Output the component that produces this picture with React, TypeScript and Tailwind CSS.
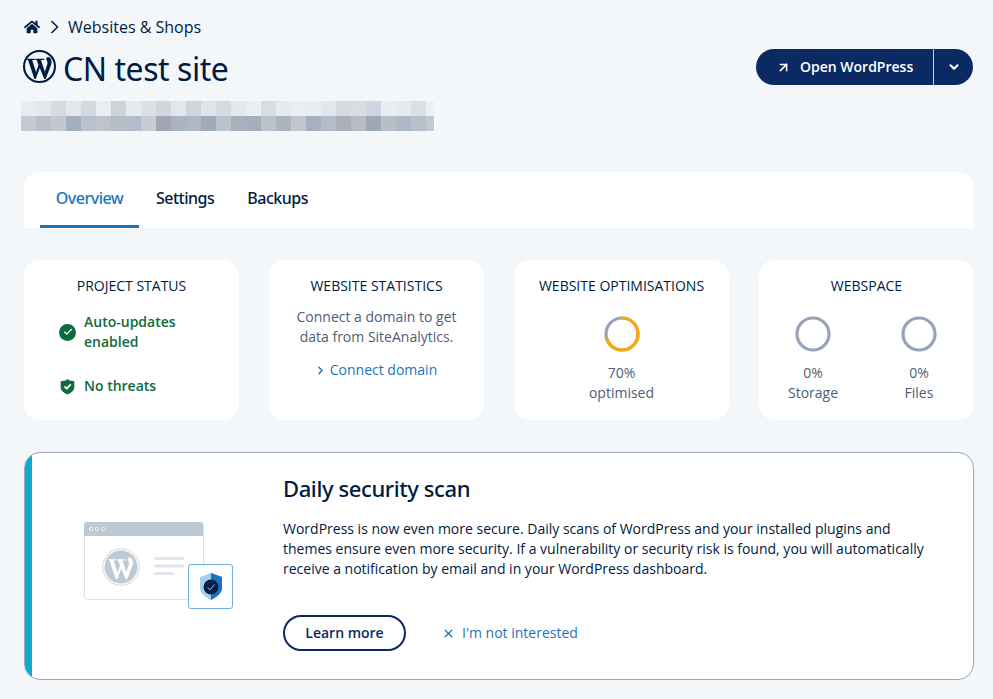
import React from "react";
import { FaHome } from "react-icons/fa";
import { LuChevronDown, LuArrowUpRight, LuChevronRight, LuX, LuCheck } from "react-icons/lu";

const row1 = ["#e8ebef","#e3e6ed","#d6dae3","#e3e7ea","#d3d9e1","#eaedf1","#cdd3da","#e6eaef","#dbe1e9","#d3d7db","#e2e7ef","#d0d5dd","#dfe3eb","#d4d9e2","#e4e8ec","#eaeef1","#d8dce3","#e7eaef","#ebeef2","#e9ecf1","#e3e6ed","#d6d9e1","#d9dce3","#cfd6e0","#e9edf1","#e6eaee","#dadfe4","#ecf0f4"];
const row2 = ["#c3cad4","#b9bfcb","#c3c8d0","#a3b0c0","#b9c1cc","#bdc4ce","#b5bdc9","#b5bcc9","#c5ccd5","#a1a6b2","#a8b5c5","#afb7c4","#9fabbb","#b9c3cc","#a7b0bc","#a3afbc","#b9c3cc","#adb3bf","#bfc6d0","#a7b1be","#b3bcc8","#a9afbb","#b5bcc6","#9ca8b6","#b7bdc9","#adb9c5","#b7bfca","#c1c9d2"];

const head = { fontFamily: '"Noto Sans", sans-serif' };
const W_PATH =
  "M4 8.400H11.400V9.600H8.900L12.600 21.400L15 14.600L13.300 9.600H12V8.400H20.600V9.600H17.400L21.200 21.200L23.400 14.300C24.200 11.600 23.400 10.600 22.800 9.600C22 8.200 23 6.800 24.400 6.800C25.600 6.800 27 8 27.400 9.600C28 12 27.500 13.500 26.800 15.600L22 28H20.600L16.300 17.400L12.400 28H11L4.900 9.600H4Z";

function Ring({ pct }: { pct: number }) {
  const c = 2 * Math.PI * 16;
  return (
    <svg width="36" height="36" viewBox="0 0 36 36" className="block">
      <circle cx="18" cy="18" r="16" fill="none" stroke="#97a3b6" strokeWidth="3.2" />
      {pct > 0 && (
        <circle
          cx="18"
          cy="18"
          r="16"
          fill="none"
          stroke="#f9a80e"
          strokeWidth="3.2"
          strokeDasharray={`${(c * pct) / 100} ${c}`}
          transform="rotate(-90 18 18)"
        />
      )}
    </svg>
  );
}

function Card({ title, children }: { title: string; children: React.ReactNode }) {
  return (
    <div className="bg-white rounded-2xl h-[160px] pt-[15px] flex flex-col">
      <div className="text-center text-[14px] leading-[22px] text-[#001b41]">{title}</div>
      {children}
    </div>
  );
}

function Illustration() {
  return (
    <svg width="150" height="90" viewBox="0 0 150 90" className="block">
      <rect x="0.5" y="0.5" width="119" height="77" rx="3" fill="#fff" stroke="#dbe2ea" />
      <path d="M0 14V3a3 3 0 0 1 3-3h113a3 3 0 0 1 3 3v11z" fill="#bccad6" />
      <circle cx="7" cy="7" r="1.7" fill="none" stroke="#fff" strokeWidth="0.7" />
      <circle cx="13" cy="7" r="1.7" fill="none" stroke="#fff" strokeWidth="0.7" />
      <circle cx="19.5" cy="7" r="1.7" fill="none" stroke="#fff" strokeWidth="0.7" />
      <circle cx="37" cy="45" r="18.200" fill="none" stroke="#c6d2dc" strokeWidth="0.9" />
      <circle cx="37" cy="45" r="16.500" fill="#bccad6" />
      <g transform="translate(20.500 28.500) scale(1.030)">
        <path d={W_PATH} fill="#fff" />
      </g>
      <rect x="70" y="35" width="30" height="3" rx="1.5" fill="#e0e6ec" />
      <rect x="70" y="42.500" width="30" height="3" rx="1.5" fill="#e0e6ec" />
      <rect x="70" y="50" width="20" height="3" rx="1.5" fill="#e0e6ec" />
      <rect x="104.500" y="42.500" width="44" height="44" rx="2.500" fill="#fff" stroke="#74aee0" />
      <path d="M127 51l11 4v11c0 5-5 9-11 12-6-3-11-7-11-12V55z" fill="#a5cdee" />
      <path d="M127 51l11 4v11c0 5-5 9-11 12z" fill="#1c72bd" />
      <circle cx="127" cy="65" r="7.500" fill="#06204a" />
      <path d="M123.800 65.400l2.200 2.400 4.500-5.400" fill="none" stroke="#cfe3f5" strokeWidth="0.800" />
    </svg>
  );
}

export default function App() {
  return (
    <div
      className="min-h-[699px] bg-[#f4f7fa] pl-6 pr-[19px] pt-[15px] text-[#001b41] overflow-hidden"
      style={{ fontFamily: '"Open Sans", sans-serif' }}
    >
      <div className="flex items-center h-6 text-[16px]">
        <FaHome className="text-[#001b41] text-[16px] mr-[10px]" />
        <svg width="9" height="14" viewBox="0 0 9 14" className="mr-[9px]">
          <path d="M1.500 1l6 6-6 6" fill="none" stroke="#001b41" strokeWidth="1.500" />
        </svg>
        <span>Websites &amp; Shops</span>
      </div>

      <div className="flex justify-between items-start h-[62px]">
        <div className="flex items-center h-[58px] mt-[1px]">
          <svg width="33" height="33" viewBox="0 0 32 32" className="mr-[7px] -mt-[6px] -ml-[1px] shrink-0">
            <circle cx="16" cy="16" r="15" fill="none" stroke="#001b41" strokeWidth="2" />
            <path d={W_PATH} fill="#001b41" />
          </svg>
          <span className="text-[32px] leading-10 tracking-[-0.45px] -mt-[1px]" style={head}>CN test site</span>
        </div>
        <div className="flex h-9 mt-[10px] bg-[#0b2a63] rounded-full text-white mr-px">
          <div className="flex items-center pl-[21px] pb-px w-[177px] text-[14px] font-semibold">
            <LuArrowUpRight className="w-[15px] h-[15px] mr-[9px] -ml-px mt-px" strokeWidth={2.4} />
            Open WordPress
          </div>
          <div className="w-px bg-[#c5cedb]" />
          <div className="flex items-center justify-center w-[39px]">
            <LuChevronDown className="w-[14px] h-[14px]" strokeWidth={3.5} />
          </div>
        </div>
      </div>

      <div className="-ml-[3px] w-[413px] overflow-hidden">
        <div className="flex">{row1.map((c, i) => <div key={i} className="w-[15px] h-[15px] shrink-0" style={{ background: c }} />)}</div>
        <div className="flex">{row2.map((c, i) => <div key={i} className="w-[15px] h-[15px] shrink-0" style={{ background: c }} />)}</div>
      </div>

      <div className="mt-[41px] h-14 bg-white rounded-t-2xl flex pl-4 text-[16px] font-medium tracking-[-0.5px] pb-[5px]" style={head}>
        <div className="w-[99px] h-14 flex items-center justify-center border-b-[3px] border-[#1b74bd] text-[#1b74bd] pb-px">Overview</div>
        <div className="ml-[17px] flex items-center text-[#001b41]">Settings</div>
        <div className="ml-[33px] flex items-center text-[#001b41]">Backups</div>
      </div>

      <div className="mt-8 grid grid-cols-4 gap-[30px]">
        <Card title="PROJECT STATUS">
          <div className="pl-[35px] pt-[15px] text-[14px] font-semibold text-[#0e6b3c]">
            <div className="flex items-center leading-5">
              <span className="w-[17px] h-[17px] rounded-full bg-[#0e6b3c] flex items-center justify-center mr-2 shrink-0">
                <LuCheck className="w-[10px] h-[10px] text-white" strokeWidth={3} />
              </span>
              <span className="w-[110px]">Auto-updates enabled</span>
            </div>
            <div className="flex items-center leading-5 mt-[24px]">
              <svg width="17" height="17" viewBox="0 0 17 17" className="mr-2 shrink-0">
                <path d="M8.500 1l2 1.400 4.800.9v6c0 3.400-3 5.600-6.800 7.200C4.700 14.900 1.700 12.700 1.700 9.300v-6l4.800-.9z" fill="#0e6b3c" />
                <path d="M5.500 8.300l2.200 2.300 4-4.200" fill="none" stroke="#fff" strokeWidth="1.800" />
              </svg>
              No threats
            </div>
          </div>
        </Card>
        <Card title="WEBSITE STATISTICS">
          <div className="pt-[10px] text-center text-[14px] leading-5 text-[#4e5e78]">
            Connect a domain to get<br />data from SiteAnalytics.
          </div>
          <div className="mt-[13px] flex items-center justify-center text-[14px] leading-5 text-[#1b74bd] -ml-[2px]">
            <LuChevronRight className="w-[13px] h-[13px] mr-[3px]" strokeWidth={2.5} />
            Connect domain
          </div>
        </Card>
        <Card title="WEBSITE OPTIMISATIONS">
          <div className="flex flex-col items-center pt-[19px] text-[14px] leading-5 text-[#4e5e78]">
            <Ring pct={70} />
            <div className="mt-[11px] text-center">70%<br />optimised</div>
          </div>
        </Card>
        <Card title="WEBSPACE">
          <div className="flex justify-between pt-[19px] pl-[29px] pr-[30px] text-[14px] leading-5 text-[#4e5e78]">
            <div className="flex flex-col items-center w-[50px]">
              <Ring pct={0} />
              <div className="mt-[11px] text-center">0%<br />Storage</div>
            </div>
            <div className="flex flex-col items-center w-[50px]">
              <Ring pct={0} />
              <div className="mt-[11px] text-center">0%<br />Files</div>
            </div>
          </div>
        </Card>
      </div>

      <div className="mt-8 h-[228px] bg-white rounded-2xl border border-[#9aa6b9] overflow-hidden flex">
        <div className="w-[7px] bg-[#0fa9c9] shrink-0" />
        <div className="w-[251px] shrink-0 pl-[52px] pt-[69px]">
          <Illustration />
        </div>
        <div className="pt-[19px]">
          <div className="text-[22px] leading-8 font-medium tracking-[-0.4px]" style={head}>Daily security scan</div>
          <p className="mt-[15px] w-[660px] text-[14px] leading-5 text-[#001b41]">
            WordPress is now even more secure. Daily scans of WordPress and your installed plugins and<br />
            themes ensure even more security. If a vulnerability or security risk is found, you will automatically<br />
            receive a notification by email and in your WordPress dashboard.
          </p>
          <div className="mt-[36px] flex items-center text-[14px]">
            <div className="w-[123px] h-9 rounded-full border-2 border-[#0b2a63] flex items-center justify-center font-semibold text-[#0b2a63] pb-[2px]">Learn more</div>
            <div className="ml-[36px] flex items-center text-[#1b74bd] pb-px">
              <LuX className="w-[13px] h-[13px] mr-[7px] mt-px" strokeWidth={2.4} />
              I'm not interested
            </div>
          </div>
        </div>
      </div>
    </div>
  );
}
